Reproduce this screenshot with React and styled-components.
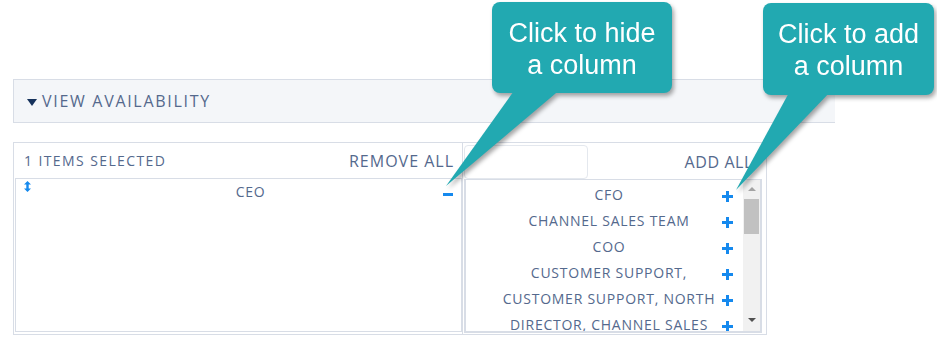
import React from 'react';
import styled, { createGlobalStyle } from 'styled-components';

const GlobalStyle = createGlobalStyle`
  html, body {
    margin: 0;
    padding: 0;
    background: #fff;
  }
  body {
    font-family: "Open Sans", "Liberation Sans", sans-serif;
    color: #54698d;
  }
`;

const Page = styled.div`
  position: relative;
  width: 937px;
  height: 347px;
  padding: 79px 0 0 13px;
  box-sizing: border-box;
  overflow: hidden;
`;

const SectionBar = styled.div`
  width: 822px;
  height: 44px;
  box-sizing: border-box;
  background: #f4f6f9;
  border: 1px solid #d8dde6;
  border-right: 0;
  display: flex;
  align-items: center;
  padding-left: 13px;
  gap: 5px;
  font-size: 16px;
  letter-spacing: 1.7px;
`;

const Caret = styled.span`
  width: 0;
  height: 0;
  border-left: 5px solid transparent;
  border-right: 5px solid transparent;
  border-top: 7px solid #16325c;
  margin-top: 2px;
`;

const Panel = styled.div`
  margin-top: 19px;
  width: 754px;
  height: 193px;
  box-sizing: border-box;
  border: 1px solid #d8dde6;
  display: grid;
  grid-template-columns: 448px 1fr;
  grid-template-rows: 100%;
`;

const Column = styled.div`
  display: flex;
  flex-direction: column;
  min-width: 0;
  min-height: 0;
  overflow: hidden;
  padding: ${({ side }) => (side === 'left' ? '0 0 2px 1px' : '1px 4px 1px 1px')};
  border-left: ${({ side }) => (side === 'right' ? '1px solid #d8dde6' : '0')};
`;

const ColumnHead = styled.div`
  height: 35px;
  display: flex;
  align-items: center;
  justify-content: space-between;
  padding: ${({ side }) => (side === 'left' ? '0 8px 0 9px' : '0 9px 0 0')};
  flex-shrink: 0;
`;

const Count = styled.span`
  font-size: 14px;
  letter-spacing: 1.4px;
`;

const HeadAction = styled.span`
  font-size: 16px;
  letter-spacing: ${({ tight }) => (tight ? '0.6px' : '1px')};
`;

const Search = styled.div`
  width: 124px;
  height: 34px;
  box-sizing: border-box;
  border: 1px solid #e4e8ee;
  border-radius: 4px;
`;

const ListBox = styled.div`
  flex: 1;
  min-height: 0;
  box-sizing: border-box;
  border: 1px solid #d8dde6;
  border-width: ${({ thick }) => (thick ? '1px 2px 2px 2px' : '1px')};
  display: flex;
  overflow: hidden;
`;

const Items = styled.div`
  flex: 1;
  display: flex;
  flex-direction: column;
  padding-top: ${({ pad }) => pad || '4px'};
`;

const Row = styled.div`
  height: 26px;
  display: grid;
  grid-template-columns: ${({ left }) => (left ? '46px 1fr 22px' : '1fr 21px')};
  padding-left: ${({ left }) => (left ? '0' : '30px')};
  align-items: start;
  font-size: 14px;
  letter-spacing: 0.75px;
  flex-shrink: 0;
`;

const Label = styled.span`
  text-align: center;
  line-height: 22px;
  white-space: nowrap;
`;

const IconCell = styled.span`
  display: flex;
  justify-content: flex-start;
  padding-top: ${({ top }) => top || '0'};
  padding-left: ${({ left }) => left || '0'};
`;

const Scrollbar = styled.div`
  width: 17px;
  background: #f1f1f1;
  display: flex;
  flex-direction: column;
  align-items: center;
  flex-shrink: 0;
`;

const ScrollArrow = styled.span`
  width: 0;
  height: 0;
  border-left: 4px solid transparent;
  border-right: 4px solid transparent;
  ${({ dir }) =>
    dir === 'up'
      ? 'border-bottom: 4px solid #a3a3a3; margin: 7px 0 8px;'
      : 'border-top: 4px solid #505050; margin: auto 0 9px;'}
`;

const Thumb = styled.span`
  width: 15px;
  height: 35px;
  background: #c1c1c1;
`;

const Callout = styled.div`
  position: absolute;
  left: ${({ x }) => x}px;
  top: ${({ y }) => y}px;
  width: ${({ w }) => w}px;
  height: ${({ h }) => h}px;
  filter: drop-shadow(2px 3px 2px rgba(0, 0, 0, 0.35));
`;

const Bubble = styled.div`
  position: relative;
  z-index: 1;
  height: 100%;
  border-radius: 8px;
  background: #22a9b1;
  color: #fff;
  font-family: "Liberation Sans", Arial, sans-serif;
  font-size: 27px;
  line-height: 32px;
  text-align: center;
  display: flex;
  align-items: center;
  justify-content: center;
  padding-top: 2px;
  box-sizing: border-box;
`;

const Tail = styled.svg`
  position: absolute;
  left: 0;
  top: 0;
  overflow: visible;
`;

const DragIcon = () => (
  <svg width="7" height="11" viewBox="0 0 7 11">
    <path d="M3.5 0 L7 3.5 H4.7 V7.5 H7 L3.5 11 L0 7.5 H2.3 V3.5 H0 Z" fill="#1589ee" />
  </svg>
);

const Minus = () => (
  <svg width="10" height="3" viewBox="0 0 10 3">
    <rect width="10" height="3" fill="#1589ee" />
  </svg>
);

const Plus = () => (
  <svg width="11" height="11" viewBox="0 0 11 11">
    <rect x="0" y="4" width="11" height="3" fill="#1589ee" />
    <rect x="4" y="0" width="3" height="11" fill="#1589ee" />
  </svg>
);

const available = [
  'CFO',
  'CHANNEL SALES TEAM',
  'COO',
  'CUSTOMER SUPPORT,',
  'CUSTOMER SUPPORT, NORTH',
  'DIRECTOR, CHANNEL SALES',
];

const callouts = [
  { x: 492, y: 2, w: 180, h: 91, tail: '24,86 70,86 -46,184', lines: ['Click to hide', 'a column'] },
  { x: 763, y: 3, w: 171, h: 92, tail: '28,86 70,86 -27,187', lines: ['Click to add', 'a column'] },
];

export default function App() {
  return (
    <>
      <GlobalStyle />
      <Page>
        <SectionBar>
          <Caret />
          VIEW AVAILABILITY
        </SectionBar>
        <Panel>
          <Column side="left">
            <ColumnHead side="left">
              <Count>1 ITEMS SELECTED</Count>
              <HeadAction>REMOVE ALL</HeadAction>
            </ColumnHead>
            <ListBox>
              <Items pad="2px">
                <Row left>
                  <IconCell left="8px"><DragIcon /></IconCell>
                  <Label>CEO</Label>
                  <IconCell top="12px" left="4px"><Minus /></IconCell>
                </Row>
              </Items>
            </ListBox>
          </Column>
          <Column side="right">
            <ColumnHead side="right">
              <Search />
              <HeadAction tight>ADD ALL</HeadAction>
            </ColumnHead>
            <ListBox thick>
              <Items>
                {available.map((name) => (
                  <Row key={name}>
                    <Label>{name}</Label>
                    <IconCell top="7px"><Plus /></IconCell>
                  </Row>
                ))}
              </Items>
              <Scrollbar>
                <ScrollArrow dir="up" />
                <Thumb />
                <ScrollArrow dir="down" />
              </Scrollbar>
            </ListBox>
          </Column>
        </Panel>
        {callouts.map((c) => (
          <Callout key={c.lines[0]} x={c.x} y={c.y} w={c.w} h={c.h}>
            <Tail width={c.w} height={c.h}>
              <polygon points={c.tail} fill="#22a9b1" />
            </Tail>
            <Bubble>
              {c.lines[0]}
              <br />
              {c.lines[1]}
            </Bubble>
          </Callout>
        ))}
      </Page>
    </>
  );
}
